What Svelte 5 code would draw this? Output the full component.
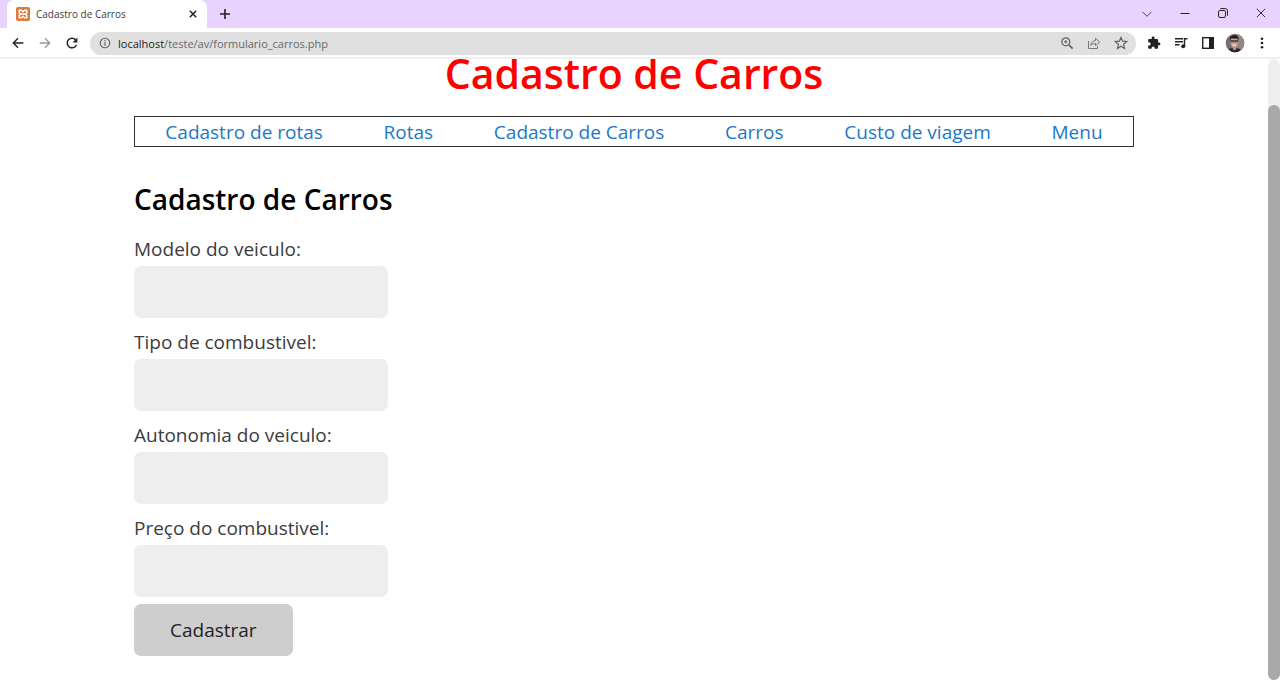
<script>
  const links = ['Cadastro de rotas', 'Rotas', 'Cadastro de Carros', 'Carros', 'Custo de viagem', 'Menu'];
  const fields = [
    { id: 'modelo', label: 'Modelo do veiculo:' },
    { id: 'tipo', label: 'Tipo de combustivel:' },
    { id: 'autonomia', label: 'Autonomia do veiculo:' },
    { id: 'preco', label: 'Preço do combustivel:' }
  ];
</script>

<div class="window">
  <header class="tabbar">
    <div class="tab">
      <svg class="favicon" width="14" height="14" viewBox="0 0 14 14" aria-hidden="true">
        <rect width="14" height="14" rx="2" fill="#e07a35" />
        <path d="M4.6 3.2H3.2v2.4L4.6 7 3.2 8.4v2.4h2.2L7 9.2l1.6 1.6h2.2V8.4L9.4 7l1.4-1.4V3.2H8.6L7 4.8 5.4 3.2z" fill="none" stroke="#fff" stroke-width="1.5" stroke-linejoin="round" />
        <path d="M5 7h4" stroke="#fff" stroke-width="1.5" />
      </svg>
      <span class="tab-title">Cadastro de Carros</span>
      <button class="icon" aria-label="Fechar guia">
        <svg width="14" height="14" viewBox="0 0 14 14"><path d="M3.8 3.8l6.4 6.4M10.2 3.8l-6.4 6.4" stroke="#222" stroke-width="1.5" /></svg>
      </button>
    </div>
    <button class="icon new-tab" aria-label="Nova guia">
      <svg width="14" height="14" viewBox="0 0 14 14"><path d="M7 2v10M2 7h10" stroke="#222" stroke-width="1.6" /></svg>
    </button>
    <div class="window-controls">
      <button class="icon" aria-label="Pesquisar guias"><svg width="14" height="14" viewBox="0 0 14 14"><path d="M2.5 4.8L7 9.3l4.5-4.5" fill="none" stroke="#54405f" /></svg></button>
      <button class="icon" aria-label="Minimizar"><svg width="14" height="14" viewBox="0 0 14 14"><path d="M2.5 6.5h9" stroke="#222" /></svg></button>
      <button class="icon" aria-label="Restaurar"><svg width="14" height="14" viewBox="0 0 14 14" fill="none" stroke="#222"><rect x="2.5" y="3.5" width="7" height="7" rx="1.4" /><path d="M4.3 1.6h4.900a2.3 2.3 0 0 1 2.3 2.3v4.8" /></svg></button>
      <button class="icon" aria-label="Fechar"><svg width="14" height="14" viewBox="0 0 14 14"><path d="M2.8 1.8l8.4 8.4M11.2 1.8l-8.4 8.4" stroke="#3a2c42" /></svg></button>
    </div>
  </header>

  <div class="toolbar">
    <div class="navigation">
      <button class="icon" aria-label="Voltar"><svg width="14" height="14" viewBox="0 0 14 14" fill="none" stroke="#222" stroke-width="1.4"><path d="M12.3 7H2.5M7 2.3L2.3 7 7 11.7" /></svg></button>
      <button class="icon" aria-label="Avançar" disabled><svg width="14" height="14" viewBox="0 0 14 14" fill="none" stroke="#999" stroke-width="1.3"><path d="M1.7 7h9.8M7 2.3L11.7 7 7 11.7" /></svg></button>
      <button class="icon" aria-label="Recarregar"><svg width="14" height="14" viewBox="0 0 14 14"><path d="M11.4 9A4.8 4.8 0 1 1 10.7 3.9" fill="none" stroke="#222" stroke-width="1.5" /><path d="M12.4 1.4v5H7.6z" fill="#222" /></svg></button>
    </div>
    <div class="address">
      <svg width="14" height="14" viewBox="0 0 14 14" aria-hidden="true"><circle cx="7" cy="7" r="4.8" fill="none" stroke="#5f6368" stroke-width="1.1" /><path d="M7 6.3v3.5M7 4.1v1.2" stroke="#5f6368" stroke-width="1.2" /></svg>
      <span class="url"><b>localhost</b>/teste/av/formulario_carros.php</span>
      <button class="icon" aria-label="Zoom"><svg width="14" height="14" viewBox="0 0 14 14" fill="none" stroke="#5f6368" stroke-width="1.2"><circle cx="5.8" cy="5.8" r="4" /><path d="M8.9 8.9l3.7 3.7" stroke-width="1.6" /><path d="M5.8 4v3.6M4 5.8h3.6" stroke-width="1" /></svg></button>
      <button class="icon" aria-label="Compartilhar"><svg width="14" height="14" viewBox="0 0 14 14" fill="none" stroke="#74777b"><path d="M1.5 5v7.5h9V10" /><path d="M3.7 9.5c.3-3 2-4.6 4.8-4.9V2.2l4.2 3.9-4.2 3.7V7.5c-2.2 0-3.6.6-4.8 2z" stroke-linejoin="round" /></svg></button>
      <button class="icon" aria-label="Favoritar"><svg width="14" height="14" viewBox="0 0 14 14"><path d="M7 1.400l1.600 3.800 4.100.4-3.100 2.700.9 4.100L7 10.200l-3.500 2.200.9-4.100-3.100-2.700 4.100-.4z" fill="none" stroke="#5f6368" stroke-width="1.2" /></svg></button>
    </div>
    <div class="actions">
      <button class="icon" aria-label="Extensões"><svg width="14" height="14" viewBox="0 0 24 24"><path d="M20.5 11H19V7c0-1.1-.9-2-2-2h-4V3.5a2.5 2.5 0 0 0-5 0V5H4c-1.1 0-2 .9-2 2v3.8h1.5a2.7 2.7 0 0 1 0 5.4H2V20c0 1.1.9 2 2 2h3.8v-1.5a2.7 2.7 0 0 1 5.4 0V22H17c1.1 0 2-.9 2-2v-4h1.500a2.5 2.5 0 0 0 0-5z" fill="#222" /></svg></button>
      <button class="icon" aria-label="Controle de mídia"><svg width="14" height="14" viewBox="0 0 14 14"><path d="M1 2.700h8M1 5.700h8M1 8.700h4.500M10.500 10.500V2.700H13.500" fill="none" stroke="#222" stroke-width="1.4" /><circle cx="9.200" cy="10.300" r="2" fill="#222" /></svg></button>
      <button class="icon" aria-label="Painel lateral"><svg width="14" height="14" viewBox="0 0 14 14"><rect x="1.700" y="1.700" width="10.600" height="10.600" fill="none" stroke="#222" stroke-width="1.400" /><path d="M8 1.500h4.500v11H8z" fill="#222" /></svg></button>
      <button class="icon" aria-label="Perfil">
        <svg width="20" height="20" viewBox="0 0 20 20">
          <defs><clipPath id="avatar"><circle cx="10" cy="10" r="9.300" /></clipPath></defs>
          <g clip-path="url(#avatar)">
            <rect width="20" height="20" fill="#77706f" />
            <path d="M12 0h8v20h-8z" fill="#8f8987" />
            <path d="M2 20c0-4 3-5 7-5s8 1 9 5z" fill="#292535" />
            <path d="M7 12h5l-1 5H8z" fill="#b9857c" />
            <ellipse cx="9.200" cy="9" rx="3.700" ry="5.500" fill="#d3a59a" />
            <path d="M4.900 8C4.200 3.500 7 2 9.500 2.200c3.500 0 4.800 2.300 3.800 5.800l-.8-2.500c-2 .3-4.500 0-6.500 0z" fill="#241d1e" />
            <path d="M6 7.500h2.600v1.500H6zM9.900 7.500h2.600v1.500H9.900zM8.600 8h1.300" fill="#b58b83" stroke="#2b2224" stroke-width=".7" />
            <path d="M7.600 12.200h3.200" stroke="#f4e4e0" />
          </g>
        </svg>
      </button>
      <button class="icon" aria-label="Mais opções"><svg width="14" height="14" viewBox="0 0 14 14" fill="#222"><circle cx="7" cy="2.700" r="1.300" /><circle cx="7" cy="7" r="1.300" /><circle cx="7" cy="11.300" r="1.300" /></svg></button>
    </div>
  </div>

  <div class="viewport">
    <main>
      <h1>Cadastro de Carros</h1>
      <nav>
        {#each links as link}
          <a href="#top">{link}</a>
        {/each}
      </nav>
      <h2>Cadastro de Carros</h2>
      <form onsubmit={(event) => event.preventDefault()}>
        {#each fields as field}
          <div class="field">
            <label for={field.id}>{field.label}</label>
            <input id={field.id} type="text" />
          </div>
        {/each}
        <button class="submit" type="submit">Cadastrar</button>
      </form>
    </main>
    <div class="scrollbar"><div class="thumb"></div></div>
  </div>
</div>

<style>
  :global(body) {
    margin: 0;
    background: #fff;
  }
  .window {
    display: flex;
    flex-direction: column;
    min-height: 100vh;
    font-family: "Open Sans", "Noto Sans", sans-serif;
    color: #3c3c3c;
  }
  .icon {
    display: flex;
    padding: 0;
    border: 0;
    background: none;
  }
  svg {
    display: block;
    flex: none;
  }
  .tabbar {
    display: flex;
    align-items: center;
    height: 28px;
    padding: 0 12px 0 7px;
    background: #e8d3fe;
  }
  .tab {
    box-sizing: border-box;
    display: flex;
    align-items: center;
    gap: 6px;
    width: 200px;
    height: 28px;
    padding: 0 7px 0 9px;
    border-radius: 7px 7px 0 0;
    background: #fff;
  }
  .tab-title {
    flex: 1;
    font-size: 10px;
    white-space: nowrap;
  }
  .new-tab {
    margin-left: 11px;
  }
  .window-controls {
    display: flex;
    gap: 24px;
    margin-left: auto;
  }
  .toolbar {
    box-sizing: border-box;
    display: flex;
    align-items: center;
    height: 31px;
    padding: 1px 11px 0;
    border-bottom: 2px solid #efefef;
  }
  .navigation {
    display: flex;
    gap: 13px;
    margin-right: 11px;
  }
  .address {
    display: flex;
    flex: 1;
    align-items: center;
    gap: 13px;
    height: 23px;
    padding: 0 8px;
    border-radius: 12px;
    background: #e0e0e0;
  }
  .url {
    flex: 1;
    margin-left: -7px;
    font-size: 11px;
    color: #66696c;
  }
  .url b {
    font-weight: 400;
    color: #222;
  }
  .actions {
    display: flex;
    align-items: center;
    gap: 13px;
    margin-left: 11px;
  }
  .actions .icon:nth-child(4) {
    margin: 0 -3px;
  }
  .viewport {
    display: flex;
    flex: 1;
    overflow: hidden;
  }
  main {
    flex: 1;
    max-width: 1000px;
    margin: 0 auto;
    padding-bottom: 24px;
  }
  h1 {
    margin: -10px 0 19px;
    font-size: 41px;
    font-weight: 600;
    line-height: 48px;
    text-align: center;
    color: #f00;
  }
  nav {
    display: flex;
    justify-content: space-around;
    padding-top: 2px;
    border: 1px solid #333;
    font-size: 19px;
    line-height: 27px;
  }
  nav a {
    color: #1c78c8;
    text-decoration: none;
  }
  h2 {
    margin: 32px 0 16px;
    font-size: 28px;
    font-weight: 600;
    line-height: 40px;
    color: #000;
  }
  .field {
    display: flex;
    flex-direction: column;
    align-items: flex-start;
    gap: 3px;
    margin-bottom: 10px;
  }
  .field:nth-last-child(2) {
    margin-bottom: 7px;
  }
  label {
    font-size: 19px;
    line-height: 28px;
  }
  input {
    box-sizing: border-box;
    width: 254px;
    height: 52px;
    padding: 0 12px;
    border: 0;
    border-radius: 7px;
    background: #eee;
    font: inherit;
    font-size: 19px;
  }
  .submit {
    height: 52px;
    padding: 0 36px;
    border: 0;
    border-radius: 7px;
    background: #cecece;
    font: inherit;
    font-size: 19px;
    color: #222;
  }
  .scrollbar {
    box-sizing: border-box;
    width: 12px;
    padding-top: 46px;
    border-radius: 6px;
    background: #eee;
  }
  .thumb {
    height: 100%;
    border-radius: 6px;
    background: #a9a9a9;
  }
</style>
